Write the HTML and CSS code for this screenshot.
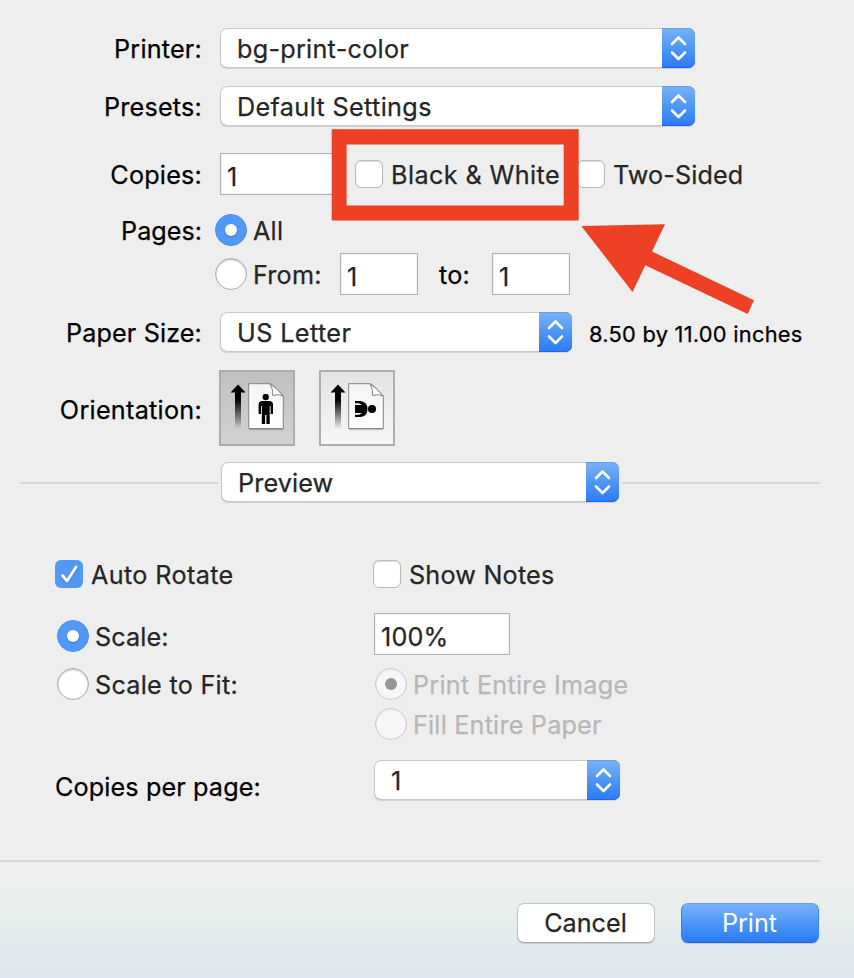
FILE: index.html
```html
<!DOCTYPE html>
<html lang="en">
<head>
<meta charset="utf-8">
<title>Print</title>
<link rel="stylesheet" href="styles.css">
</head>
<body>
<svg class="defs" width="0" height="0" aria-hidden="true">
  <defs>
    <linearGradient id="fade" x1="0" y1="0" x2="0" y2="1"><stop offset=".2" stop-color="#000"/><stop offset="1" stop-color="#000" stop-opacity="0"/></linearGradient>
    <linearGradient id="paper" x1="0" y1="0" x2="0" y2="1"><stop offset="0" stop-color="#f4f4f4"/><stop offset="1" stop-color="#fff"/></linearGradient>
    <symbol id="chevrons" viewBox="0 0 33 40"><path d="M10 16 16.500 9.500 23 16M10 24.500 16.500 31 23 24.500" fill="none" stroke="#fff" stroke-width="2.600" stroke-linecap="round" stroke-linejoin="round"/></symbol>
    <symbol id="sheet" viewBox="0 0 76 76">
      <path d="M16 21H22V58H16Z" fill="url(#fade)"/><path d="M11.500 21.500 19 13.500 26.500 21.500Z"/>
      <path d="M30 13.500H52L64.500 26V59.200H30Z" class="sheet-shadow"/>
      <path d="M29.700 12.700H51Q54 13 64.300 25V57.500H29.700Z" fill="url(#paper)" stroke="#858585"/>
      <path d="M51 13Q54.500 18 53.500 24.500Q59 22.500 64 25Q57 16 51 13Z" fill="#fff" stroke="#858585"/>
    </symbol>
    <symbol id="person" viewBox="0 0 16 32"><circle cx="7.700" cy="3" r="3.200"/><path d="M3.500 7H12Q15 7.500 15 10.500V20H12.600V12H11.700V30H8.400V21H7.100V30H3.800V12H3V20H.6V10.500Q.6 7.500 3.500 7Z"/></symbol>
  </defs>
</svg>
<main class="dialog">
  <div class="row printer"><span class="label">Printer:</span><div class="select w475"><span class="ls27">bg-print-color</span><svg class="cap"><use href="#chevrons"/></svg></div></div>
  <div class="row presets"><span class="label">Presets:</span><div class="select w475"><span class="ls35">Default Settings</span><svg class="cap"><use href="#chevrons"/></svg></div></div>
  <div class="row copies"><span class="label">Copies:</span><div class="field copies-field">1</div>
    <div class="choice bw"><i class="check"></i><span class="ls42">Black &amp; White</span></div>
    <div class="choice"><i class="check"></i><span class="ls15">Two-Sided</span></div></div>
  <div class="row all"><span class="label ls0">Pages:</span><div class="choice radio-choice"><i class="radio on"></i><span>All</span></div></div>
  <div class="row from"><span class="label"></span><div class="choice radio-choice"><i class="radio"></i><span>From:</span></div><div class="field page-from">1</div><span class="to">to:</span><div class="field page-to">1</div></div>
  <div class="row paper"><span class="label ls15">Paper Size:</span><div class="select w352"><span class="ls42">US Letter</span><svg class="cap"><use href="#chevrons"/></svg></div><span class="dimensions ls27">8.50 by 11.00 inches</span></div>
  <div class="row orientation"><span class="label ls27">Orientation:</span>
    <svg class="orient selected" viewBox="2 1 72 72"><use href="#sheet" width="76" height="76"/><use href="#person" x="39" y="23" width="16" height="32"/></svg>
    <svg class="orient" viewBox="2 1 72 72"><use href="#sheet" width="76" height="76"/><circle cx="53" cy="38" r="4"/><path d="M36 30H41.500Q48.500 31 48.500 38Q48.500 45 41.500 46H36V43.700H40L43 42H36V34H43L40 32.300H36Z"/></svg></div>
  <div class="row section"><i class="rule left"></i><div class="select w398"><span class="ls15">Preview</span><svg class="cap"><use href="#chevrons"/></svg></div><i class="rule right"></i></div>
  <div class="row options first"><div class="choice left-col"><i class="check on"><svg viewBox="0 0 28 28"><path d="M7.500 15.500 12 21 21 7" fill="none" stroke="#fff" stroke-width="2.800" stroke-linecap="round" stroke-linejoin="round"/></svg></i><span class="ls35">Auto Rotate</span></div><div class="choice"><i class="check"></i><span>Show Notes</span></div></div>
  <div class="row options scale"><div class="choice radio-choice left-col"><i class="radio on"></i><span class="ls15">Scale:</span></div><div class="field percent">100%</div></div>
  <div class="row options fit"><div class="choice radio-choice left-col"><i class="radio"></i><span class="ls27">Scale to Fit:</span></div><div class="choice radio-choice disabled"><i class="radio on"></i><span class="ls27">Print Entire Image</span></div></div>
  <div class="row options fill"><span class="left-col"></span><div class="choice radio-choice disabled"><i class="radio"></i><span>Fill Entire Paper</span></div></div>
  <div class="row options per-page"><span class="left-col per-label ls15">Copies per page:</span><div class="select w246"><span>1</span><svg class="cap"><use href="#chevrons"/></svg></div></div>
</main>
<footer class="footer"><button class="button">Cancel</button><button class="button primary">Print</button></footer>
<svg class="annotation" viewBox="0 0 854 978"><path d="M331.700 129.300H578.700V220.500H331.700ZM346.600 144.500V205.500H563.700V144.500Z" fill-rule="evenodd"/><path d="M581.300 226 665 224.200 652 251.500 754 300.300 747.700 314 645.300 265.300 632.500 292Z"/></svg>
</body>
</html>
```
FILE: styles.css
```css
* { box-sizing: border-box; }
body { margin: 0; width: 854px; height: 978px; overflow: hidden; background: linear-gradient(#eeeeee 0, #eeeeee 870px, #e9eeed 915px, #e3eaed 945px, #e0e6ee 978px); color: #000; font: 25.2px/30px Inter, "Liberation Sans", sans-serif; letter-spacing: .2px; white-space: nowrap; -webkit-text-stroke: .25px; }
.defs, .annotation { position: absolute; left: 0; top: 0; pointer-events: none; }
.annotation { width: 854px; height: 978px; fill: #ed4025; }
.ls0 { letter-spacing: 0; }
.ls15 { letter-spacing: .12px; }
.ls27 { letter-spacing: .27px; }
.ls35 { letter-spacing: .36px; }
.ls42 { letter-spacing: .4px; }
.dialog { height: 862px; padding-top: 28px; display: flex; flex-direction: column; background: linear-gradient(#d8d8d8, #d8d8d8) 0 860px / 820px 2px no-repeat; }
.row { display: flex; align-items: center; flex: none; }
.label { width: 202px; margin-right: 18px; text-align: right; padding-top: 1px; }
.select { height: 40px; border-radius: 7px; background: #fff; box-shadow: inset 0 0 0 1px #c8c8c8, inset 0 -1px #b4b4b4, 0 1px 1px #0002; display: flex; align-items: center; justify-content: space-between; padding: 2px 0 0 17px; color: #262626; }
.cap { width: 33px; height: 40px; margin-top: -2px; border-radius: 0 7px 7px 0; background: linear-gradient(#7bb2f7, #4d97f6 50%, #2b7af7); box-shadow: inset 0 -1px #1d63ef, inset 0 1px #5d9ff1; }
.w475 { width: 475px; }
.w352 { width: 352px; }
.w398 { width: 398px; }
.w246 { width: 246px; }
.field { height: 42px; background: #fff; border: 1px solid #b1b1b1; box-shadow: inset 0 0 0 1px #f4f4f4; padding: 8px 0 0 6px; color: #262626; }
.choice { display: flex; align-items: center; color: #262626; gap: 8px; }
.choice span { padding-top: 1px; }
.check { width: 28px; height: 28px; border-radius: 6px; background: #fff; border: 1px solid #b9b9b9; box-shadow: inset 0 1px 1px #0002; flex: none; }
.check.on { border: 0; background: #5299f7; box-shadow: none; }
.check svg { display: block; width: 28px; height: 28px; filter: drop-shadow(0 1px 1px #0003); }
.radio { width: 32px; height: 32px; border-radius: 50%; background: #fff; border: 1px solid #ababab; box-shadow: inset 0 1px 2px #0004; flex: none; display: flex; align-items: center; justify-content: center; }
.radio.on { background: #5299f7; border-color: #4a90f0; box-shadow: none; }
.radio.on::after { content: ""; width: 12px; height: 12px; border-radius: 50%; background: #fff; box-shadow: 0 1px 2px #0004; }
.radio-choice { gap: 6px; }
.disabled { color: #b7b7b7; }
.disabled .radio { background: #f7f7f7; border-color: #cbcbcb; box-shadow: inset 0 1px 2px #0001; }
.disabled .radio.on::after { background: #969696; box-shadow: none; }
.presets { margin-top: 18px; }
.copies { margin-top: 27px; }
.copies-field { width: 120px; }
.bw { margin-left: 15px; width: 222px; }
.all { margin-top: 19px; }
.all .choice, .from .choice { margin-left: -5px; }
.from { margin-top: 7px; }
.from .choice { width: 125px; }
.page-from, .page-to { width: 78px; }
.to { width: 74px; padding: 1px 0 0 21px; }
.paper { margin-top: 17px; }
.dimensions { font-size: 21.8px; margin-left: 17px; padding-top: 4px; }
.orientation { margin-top: 18px; }
.orientation .label { padding-top: 3px; }
.orient { width: 76px; height: 76px; margin: 0 25px 0 -1px; border: 2px solid #adadad; background: linear-gradient(#e3e3e3, #f7f7f7); }
.selected { background: linear-gradient(#c0c0c0, #d2d2d2); }
.sheet-shadow { fill: #0003; }
.section { margin-top: 16px; }
.rule { height: 2px; background: #d8d8d8; margin-top: 2px; }
.rule.left { width: 198px; margin-left: 20px; margin-right: 3px; }
.rule.right { width: 198px; margin-left: 3px; }
.first { margin-top: 58px; padding-left: 55px; height: 28px; }
.left-col { width: 318px; }
.scale { margin-top: 25px; padding-left: 57px; }
.scale .left-col { width: 317px; padding-top: 4px; }
.percent { width: 136px; }
.fit { margin-top: 13px; padding-left: 57px; }
.fill { margin-top: 8px; padding-left: 57px; }
.per-page { margin-top: 20px; padding-left: 55px; height: 40px; }
.per-label { width: 319px; padding-top: 14px; }
.footer { display: flex; justify-content: flex-end; gap: 26px; padding: 41px 35px 0 0; }
.button { width: 138px; height: 40px; border: 1px solid #bfc3c4; border-bottom-color: #aaa; border-radius: 7px; background: #fff; box-shadow: 0 1px 1px #0002; color: #262626; font: inherit; padding: 0 1px 0 0; }
.primary { color: #fff; background: linear-gradient(#7bb2f7, #4d97f6 50%, #2b7af7); border-color: #5d9ff1 #3c84f0 #1d63ef; -webkit-text-stroke: 0; }
```
